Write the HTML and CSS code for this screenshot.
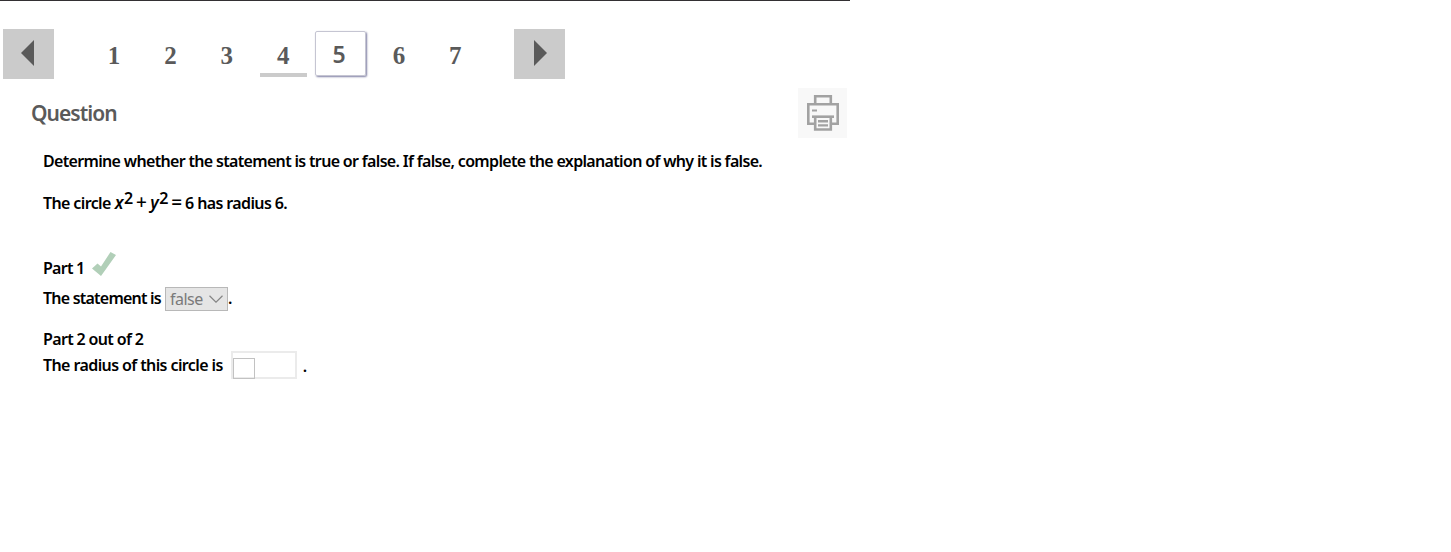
FILE: index.html
```
<!DOCTYPE html>
<html lang="en">
<head>
  <meta charset="UTF-8">
  <meta name="viewport" content="width=device-width, initial-scale=1.0">
  <title>Question 5</title>
  <link rel="stylesheet" href="styles.css">
</head>
<body>
  <div class="container">
    <div class="nav">
      <div class="arrow">
        <svg width="13" height="26" viewBox="0 0 13 26"><path d="M13 0v26L0 13z" fill="#5a5a5a"/></svg>
      </div>
      <div class="pages">
        <div class="page">1</div>
        <div class="page">2</div>
        <div class="page">3</div>
        <div class="page done">4</div>
        <div class="page current">5</div>
        <div class="page">6</div>
        <div class="page">7</div>
      </div>
      <div class="arrow next">
        <svg width="13" height="26" viewBox="0 0 13 26"><path d="M0 0v26l13-13z" fill="#5a5a5a"/></svg>
      </div>
    </div>

    <div class="header">
      <h1>Question</h1>
      <div class="print">
        <svg width="32" height="36" viewBox="0 0 32 36" fill="none" stroke="#a2a2a2" stroke-width="2.6">
          <path d="M8.2 9V1.3h15.6V9"/>
          <path d="M8 28.7H1.3V9.3h29.4v19.4H24"/>
          <path d="M5 15.5h5" stroke-width="2"/>
          <path d="M5 21.7h22"/>
          <path d="M8.2 21.7v12.8h15.6V21.7"/>
          <path d="M11 26.2h10M11 30.4h10" stroke-width="2.4"/>
        </svg>
      </div>
    </div>

    <div class="question">
      <p class="prompt">Determine whether the statement is true or false. If false, complete the explanation of why it is false.</p>
      <p class="equation">The circle <i>x</i><sup>2</sup> <span class="op">+</span> <i>y</i><sup>2</sup> <span class="op">=</span> 6 has radius 6.</p>

      <div class="part">
        <span class="part-one">Part 1</span>
        <svg width="24" height="24" viewBox="0 0 24 24"><path d="M0 16.5L5.5 11.5l3.5 3L18.5 0 24 3 9 24z" fill="#b1cfb8"/></svg>
      </div>
      <div class="answer">
        <span class="statement">The statement is</span>
        <div class="select">
          <span>false</span>
          <svg width="14" height="8" viewBox="0 0 14 8"><path d="M.5.8L7 7.2 13.5.8" fill="none" stroke="#858585" stroke-width="1.2"/></svg>
        </div>
        <span>.</span>
      </div>

      <div class="part part-two">Part 2 out of 2</div>
      <div class="answer radius">
        <span class="radius-label">The radius of this circle is</span>
        <div class="field"><div class="box"></div></div>
        <span class="radius-end">.</span>
      </div>
    </div>
  </div>
</body>
</html>
```
FILE: styles.css
```
body {
  margin: 0;
  background: #fff;
  color: #000;
  font-family: "Noto Sans", sans-serif;
  font-size: 16px;
  font-weight: 600;
}

svg {
  display: block;
}

.container {
  width: 850px;
  border-top: 1px solid #333033;
}

/* page navigation */
.nav {
  display: flex;
  padding: 28px 0 0 3px;
  height: 51px;
}

.arrow {
  width: 51px;
  height: 50px;
  background: #cbcbcb;
  box-sizing: border-box;
  padding: 11px 0 0 18px;
}

.next {
  margin-left: 35px;
  padding-left: 20px;
}

.pages {
  display: flex;
  gap: 9.4px;
  margin-left: 36.5px;
}

.page {
  width: 47px;
  height: 48px;
  box-sizing: border-box;
  text-align: center;
  font: bold 25px/53px "Liberation Serif", serif;
  color: #5a5a5a;
}

.done {
  border-bottom: 4px solid #cbcbcb;
}

.current {
  width: 51px;
  height: 45px;
  margin: 2px 0 0 -1px;
  border: 1px solid #c5c5d2;
  border-radius: 2px;
  box-shadow: 1px 1px 2px 0 #8080a4;
  font: 600 23px/44px "Noto Sans", sans-serif;
  padding-right: 3px;
}

.header {
  display: flex;
  justify-content: space-between;
  padding: 8px 3px 0 31px;
}

h1 {
  margin: 10px 0 0;
  font-size: 21px;
  line-height: 30px;
  font-weight: 600;
  letter-spacing: -0.95px;
  color: #5a5a5a;
}

.print {
  width: 40px;
  height: 43px;
  padding: 7px 0 0 9px;
  background: #f8f8f8;
}

.question {
  padding-left: 43px;
  line-height: 24px;
  white-space: nowrap;
}

.prompt {
  margin: 11px 0 0;
  letter-spacing: -0.67px;
}

.equation {
  margin: 18px 0 0;
  letter-spacing: -0.62px;
}

.equation sup {
  margin-left: 1px;
  font-size: 16px;
  line-height: 0;
  vertical-align: 5px;
}

.equation i {
  margin-left: 0.5px;
  font-size: 17px;
  line-height: 0;
}

.op {
  font-size: 19px;
  font-weight: 500;
  line-height: 0;
}

.part {
  display: flex;
  gap: 8px;
  margin-top: 37px;
  height: 30px;
  letter-spacing: -0.75px;
}

.part-one {
  padding-top: 4px;
}

.answer {
  display: flex;
  margin-top: 4px;
}

.statement {
  letter-spacing: -0.78px;
}

.select {
  display: flex;
  align-items: center;
  justify-content: space-between;
  width: 63px;
  height: 24px;
  box-sizing: border-box;
  margin: 1px 0 0 4px;
  padding: 0 4px;
  border: 1px solid #b8b8b8;
  background: #e5e5e5;
  color: #7a7a7a;
  font-weight: 400;
  letter-spacing: -0.5px;
}

.part-two {
  margin-top: 16px;
  height: 24px;
  letter-spacing: -0.65px;
}

.radius {
  margin-top: 0;
}

.radius-label {
  padding-top: 2px;
  letter-spacing: -0.6px;
}

.radius-end {
  padding-top: 3px;
}

.field {
  width: 66px;
  height: 28px;
  box-sizing: border-box;
  margin: 0 6px 0 8px;
  padding: 5px 0 0;
  border: 2px solid #ebebeb;
}

.box {
  width: 22px;
  height: 21px;
  box-sizing: border-box;
  border: 1px solid #c2c2c2;
}
```
